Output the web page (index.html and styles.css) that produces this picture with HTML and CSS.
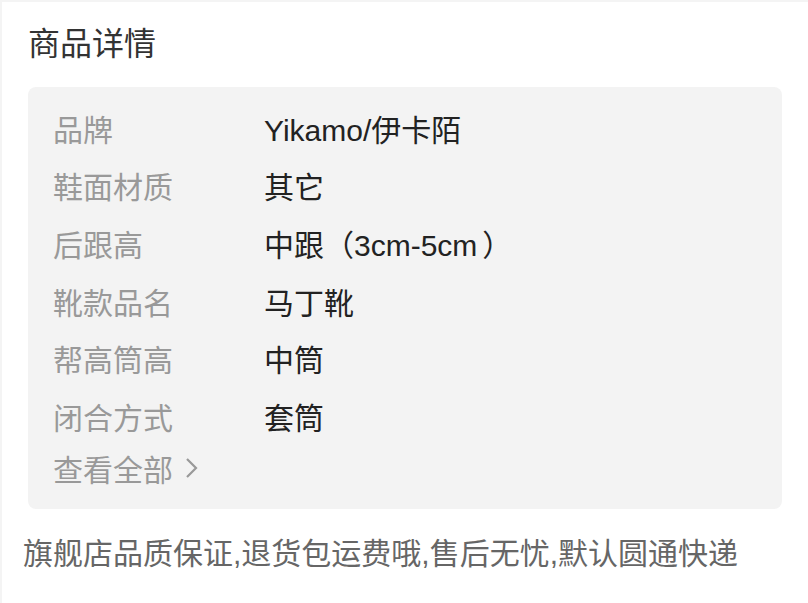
FILE: index.html
```html
<!DOCTYPE html>
<html lang="zh">
<head>
<meta charset="utf-8">
<link rel="stylesheet" href="styles.css">
</head>
<body>
<div class="card">
  <h2 class="title">商品详情</h2>
  <div class="props">
    <div class="row"><span class="label">品牌</span><span class="value">Yikamo/伊卡陌</span></div>
    <div class="row"><span class="label">鞋面材质</span><span class="value">其它</span></div>
    <div class="row"><span class="label">后跟高</span><span class="value">中跟（<span class="inner">3cm-5cm</span>）</span></div>
    <div class="row"><span class="label">靴款品名</span><span class="value">马丁靴</span></div>
    <div class="row"><span class="label">帮高筒高</span><span class="value">中筒</span></div>
    <div class="row"><span class="label">闭合方式</span><span class="value">套筒</span></div>
    <div class="more">查看全部<svg class="chev" width="14" height="22" viewBox="0 0 14 22"><path d="M2 2 L11 11 L2 20" fill="none" stroke="#999" stroke-width="2.2"/></svg></div>
  </div>
  <p class="desc">旗舰店品质保证,退货包运费哦,售后无忧,默认圆通快递</p>
</div>
</body>
</html>
```

FILE: styles.css
```css
html, body {
  margin: 0;
  padding: 0;
  background: #f4f4f4;
}
body {
  padding: 2px 0 0 2px;
  font-family: "Liberation Sans", "Noto Sans CJK SC", sans-serif;
}
.card {
  background: #fff;
  height: 601px;
  padding: 0 26px 0 26px;
  box-sizing: border-box;
}
.title {
  margin: 0;
  font-weight: normal;
  font-size: 32px;
  line-height: 85px;
  height: 85px;
  color: #333;
}
.props {
  background: #f3f3f3;
  border-radius: 8px;
  padding: 12px 25px 18px 25px;
  width: 754px;
  box-sizing: border-box;
}
.row {
  display: flex;
  height: 57.6px;
  align-items: center;
  font-size: 30px;
}
.label {
  width: 211px;
  color: #999;
  flex: none;
}
.value {
  color: #222;
}
.inner {
  margin: 0 5px 0 0;
}
.more {
  height: 46px;
  display: flex;
  align-items: center;
  font-size: 30px;
  color: #999;
}
.chev {
  margin-left: 12px;
}
.desc {
  margin: 25px 0 0 -5px;
  font-size: 30px;
  line-height: 40px;
  color: #666;
}
```
